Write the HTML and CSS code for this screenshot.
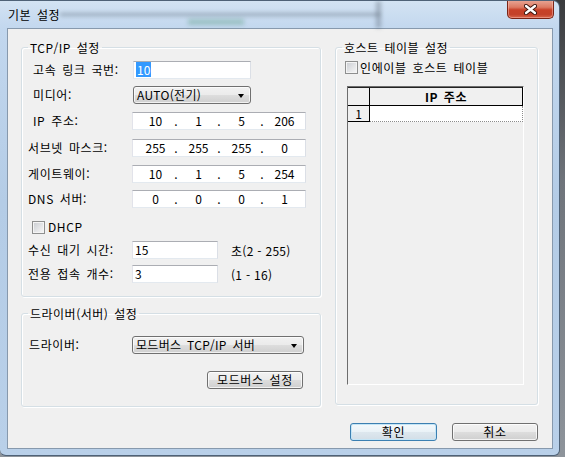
FILE: index.html
```html
<!DOCTYPE html>
<html lang="ko">
<head>
<meta charset="utf-8">
<title>기본 설정</title>
<link rel="stylesheet" href="styles.css">
</head>
<body>
<div class="window">
  <div class="glass gl-bar"></div>
  <div class="glass gl-green"></div>
  <div class="glass gl-post"></div>
  <div class="titlebar">
    <span class="title">기본 설정</span>
    <div class="close">
      <svg width="13" height="11" viewBox="0 0 13 11"><path d="M2 2 L11 9 M11 2 L2 9" stroke="#3e1710" stroke-width="4.2" stroke-linecap="round" fill="none"/><path d="M2 2 L11 9 M11 2 L2 9" stroke="#ffffff" stroke-width="2.3" stroke-linecap="round" fill="none"/></svg>
    </div>
  </div>
  <div class="client">
    <div class="columns">
      <div class="col-left">
        <fieldset class="group tcp">
          <legend>TCP/IP 설정</legend>
          <div class="form">
            <div class="lbl l1">고속 링크 국번:</div>
            <div class="edit w-id"><span class="sel">10</span></div>

            <div class="lbl l1">미디어:</div>
            <div class="combo w-id"><span>AUTO(전기)</span><i class="arrow"></i></div>

            <div class="lbl l1">IP 주소:</div>
            <div class="edit ip"><span>10</span><b>.</b><span>1</span><b>.</b><span>5</span><b>.</b><span>206</span></div>

            <div class="lbl l2">서브넷 마스크:</div>
            <div class="edit ip"><span>255</span><b>.</b><span>255</span><b>.</b><span>255</span><b>.</b><span>0</span></div>

            <div class="lbl l2">게이트웨이:</div>
            <div class="edit ip"><span>10</span><b>.</b><span>1</span><b>.</b><span>5</span><b>.</b><span>254</span></div>

            <div class="lbl l2">DNS 서버:</div>
            <div class="edit ip"><span>0</span><b>.</b><span>0</span><b>.</b><span>0</span><b>.</b><span>1</span></div>

            <div class="check-row dhcp"><span class="chk"></span><span>DHCP</span></div>

            <div class="lbl l2">수신 대기 시간:</div>
            <div class="with-note"><div class="edit w-num">15</div><span class="note">초(2 - 255)</span></div>

            <div class="lbl l2">전용 접속 개수:</div>
            <div class="with-note"><div class="edit w-num">3</div><span class="note">(1 - 16)</span></div>
          </div>
        </fieldset>

        <fieldset class="group driver">
          <legend>드라이버(서버) 설정</legend>
          <div class="form drv">
            <div class="lbl l3">드라이버:</div>
            <div class="combo w-drv"><span>모드버스 TCP/IP 서버</span><i class="arrow"></i></div>
            <div></div>
            <div class="btn w-mb">모드버스 설정</div>
          </div>
        </fieldset>
      </div>

      <fieldset class="group host">
        <legend>호스트 테이블 설정</legend>
        <div class="check-row host-chk"><span class="chk"></span><span>인에이블 호스트 테이블</span></div>
        <div class="grid">
          <div class="g-head">
            <div class="g-corner"></div>
            <div class="g-title">IP 주소</div>
          </div>
          <div class="g-row">
            <div class="g-num">1</div>
            <div class="g-cell"></div>
          </div>
        </div>
      </fieldset>
    </div>

    <div class="buttons">
      <div class="btn default w-ok">확인</div>
      <div class="btn w-cancel">취소</div>
    </div>
  </div>
</div>
</body>
</html>
```

FILE: styles.css
```css
* { box-sizing: border-box; }

html, body {
  margin: 0;
  height: 100%;
}

body {
  background: linear-gradient(180deg, #3a3b3d 0%, #6f747b 40%, #8e949b 100%);
  font-family: "Noto Sans CJK KR", "Noto Sans", sans-serif;
  font-size: 12px;
  color: #000;
  overflow: hidden;
}

.window {
  position: relative;
  width: 560px;
  height: 456px;
  border: 1px solid #4f6277;
  border-left: none;
  border-radius: 0 7px 6px 6px;
  background: linear-gradient(180deg, #d3e3f3 0px, #c2d7ee 28px, #b4cce6 200px, #b9d0e9 456px);
  display: flex;
  flex-direction: column;
  overflow: hidden;
}

/* blurred shapes seen through the glass */
.glass {
  position: absolute;
  filter: blur(2px);
}
.gl-bar {
  left: 60px;
  top: 12px;
  width: 320px;
  height: 3px;
  background: rgba(70, 80, 95, 0.4);
}
.gl-green {
  left: 188px;
  top: 18px;
  width: 56px;
  height: 6px;
  background: rgba(60, 140, 100, 0.3);
}
.gl-post {
  left: 376px;
  top: 0;
  width: 5px;
  height: 27px;
  background: rgba(70, 80, 95, 0.35);
}

.titlebar {
  position: relative;
  height: 27px;
  display: flex;
  align-items: flex-start;
  justify-content: space-between;
  padding-left: 8px;
  padding-right: 5px;
}

.title {
  margin-top: 6px;
  line-height: 15px;
  font-size: 12px;
  color: #000;
  letter-spacing: 0.5px;
  word-spacing: 2px;
}

.close {
  width: 47px;
  height: 19px;
  margin-top: -1px;
  border: 1px solid #7a2416;
  border-top: none;
  border-radius: 0 0 5px 5px;
  background: linear-gradient(180deg, #e9a897 0%, #dc7a63 40%, #c84128 55%, #c34129 80%, #d8664b 100%);
  box-shadow: inset 0 0 0 1px rgba(255, 200, 190, 0.45);
  display: flex;
  align-items: center;
  justify-content: center;
}

.client {
  margin-left: 7px;
  width: 546px;
  height: 421px;
  border: 1px solid #8799ad;
  background: #f0f0f0;
  padding: 11px 14px 0 13px;
  display: flex;
  flex-direction: column;
}

.columns {
  display: flex;
  gap: 14px;
  align-items: flex-start;
}

.col-left {
  width: 300px;
  display: flex;
  flex-direction: column;
  gap: 9px;
}

.group {
  margin: 0;
  padding: 0;
  border: 1px solid #d5dfe5;
  border-radius: 3px;
  box-shadow: 1px 1px 0 #ffffff inset, 1px 1px 0 #ffffff;
  min-width: 0;
}

.group legend {
  padding: 0 2px;
  margin-left: 6px;
  line-height: 15px;
  font-size: 12px;
  letter-spacing: 0.5px;
  word-spacing: 2px;
}

.tcp {
  height: 257px;
}

.form {
  display: grid;
  grid-template-columns: 110px auto;
  grid-template-rows: 25px 26px 27px 26px 25px 28px 23px 24px 18px;
  align-items: start;
  padding-top: 6px;
}

.lbl {
  height: 18px;
  line-height: 18px;
  letter-spacing: 0.6px;
  word-spacing: 2px;
  white-space: nowrap;
}
.l1 { padding-left: 11px; }
.l2 { padding-left: 6px; }
.l3 { padding-left: 7px; }

.edit {
  height: 18px;
  background: #fff;
  border: 1px solid;
  border-color: #abadb3 #dbdfe6 #e3e9ef #e2e3ea;
  line-height: 16px;
  padding-left: 2px;
  font-size: 12px;
}

.w-id {
  width: 118px;
  margin-left: 1px;
}

.sel {
  display: inline-block;
  background: #3399ff;
  color: #fff;
  line-height: 15px;
  padding: 0 1px;
}

.ip {
  width: 174px;
  display: flex;
  padding-left: 0;
}
.ip span {
  flex: 1;
  text-align: center;
  padding-left: 2px;
}
.ip b {
  width: 0;
  font-weight: normal;
  display: flex;
  justify-content: center;
}

.combo {
  height: 18px;
  border: 1px solid #707070;
  border-radius: 3px;
  background: linear-gradient(180deg, #f2f2f2 0%, #ebebeb 48%, #dddddd 52%, #cfcfcf 100%);
  box-shadow: inset 0 0 0 1px rgba(255, 255, 255, 0.7);
  display: flex;
  align-items: center;
  justify-content: space-between;
  padding: 0 6px 0 3px;
  line-height: 16px;
  letter-spacing: 0.3px;
  word-spacing: 2px;
  white-space: nowrap;
}

.arrow {
  width: 0;
  height: 0;
  border-top: 4px solid #000;
  border-left: 3.5px solid transparent;
  border-right: 3.5px solid transparent;
  margin-top: 2px;
}

.check-row {
  display: flex;
  align-items: center;
  gap: 3px;
  height: 18px;
  line-height: 18px;
  letter-spacing: 0.6px;
  word-spacing: 2px;
  white-space: nowrap;
}

.dhcp {
  grid-column: 1 / 3;
  padding-left: 10px;
}

.chk {
  width: 13px;
  height: 13px;
  flex: none;
  border: 1px solid #8e8f8f;
  background: linear-gradient(135deg, #c9ccd1 0%, #e6e7e9 60%, #f7f7f7 100%);
  box-shadow: inset 0 0 0 1px #f4f4f4;
}

.with-note {
  display: flex;
  align-items: center;
  gap: 13px;
}

.w-num {
  width: 86px;
}

.note {
  letter-spacing: 0.3px;
  white-space: nowrap;
}

.driver {
  height: 101px;
}

.form.drv {
  grid-template-columns: 110px 172px;
  grid-template-rows: 35px 18px;
  padding-top: 15px;
}

.w-drv {
  width: 172px;
}

.btn {
  height: 18px;
  border: 1px solid #707070;
  border-radius: 3px;
  background: linear-gradient(180deg, #f2f2f2 0%, #ebebeb 48%, #dddddd 52%, #cfcfcf 100%);
  box-shadow: inset 0 0 0 1px rgba(255, 255, 255, 0.75);
  display: flex;
  align-items: center;
  justify-content: center;
  line-height: 16px;
  letter-spacing: 0.6px;
  word-spacing: 2px;
  white-space: nowrap;
}

.w-mb {
  width: 96px;
  justify-self: end;
  margin-right: 1px;
}

.host {
  width: 203px;
  height: 365px;
  padding: 5px 13px 0 9px;
}

.host legend {
  margin-left: -3px;
}

.host-chk {
  height: 15px;
  gap: 2px;
}

.grid {
  margin-top: 11px;
  margin-left: 2px;
  height: 299px;
  border: 1px solid;
  border-color: #6d6d6d #ffffff #ffffff #6d6d6d;
  background: #f0f0f0;
}

.g-head {
  display: flex;
  height: 19px;
  border-bottom: 1px solid #000;
  border-right: 1px solid #000;
  border-top: 1px solid #222;
}

.g-corner {
  width: 22px;
  border-right: 1px solid #000;
}

.g-title {
  flex: 1;
  text-align: center;
  font-weight: bold;
  line-height: 17px;
  letter-spacing: 0.5px;
  word-spacing: 2px;
}

.g-row {
  display: flex;
  height: 16px;
}

.g-num {
  width: 22px;
  border-right: 1px solid #000;
  border-bottom: 1px solid #000;
  text-align: center;
  line-height: 15px;
}

.g-cell {
  flex: 1;
  background: #fff;
  border: 1px dotted #8c8c8c;
  border-top: none;
  border-left: none;
}

.buttons {
  display: flex;
  justify-content: flex-end;
  gap: 15px;
  margin-top: 16px;
}

.w-ok { width: 87px; }
.w-cancel { width: 86px; }

.btn.default {
  border-color: #3c7fb1;
  background: linear-gradient(180deg, #f4f9fc 0%, #eaf2f7 48%, #dde7ee 52%, #d3dee7 100%);
  box-shadow: inset 0 0 0 1px #c4e5f6;
}
```
